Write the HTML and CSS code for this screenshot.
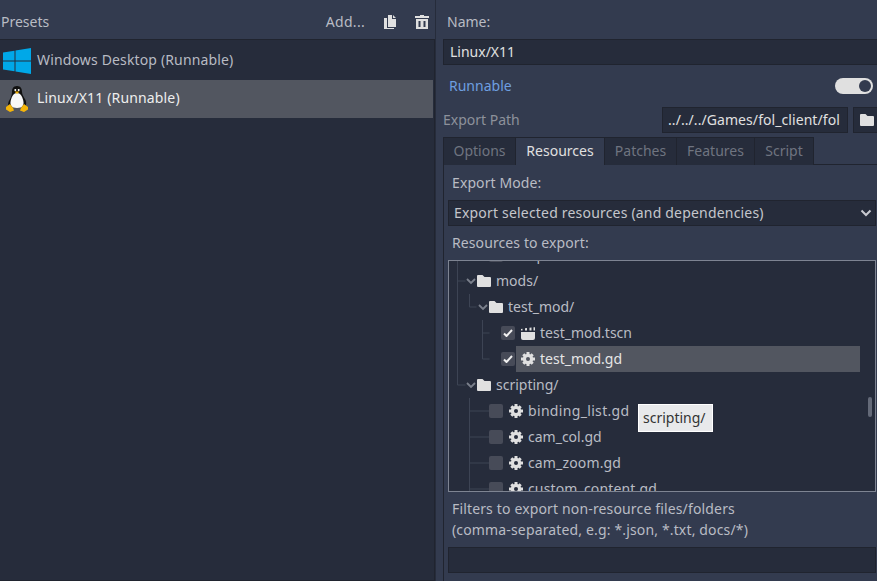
FILE: index.html
```html
<!DOCTYPE html>
<html lang="en">
<head>
  <meta charset="UTF-8">
  <title>Export</title>
  <link rel="stylesheet" href="styles.css">
</head>
<body>
  <div class="presets">
    <div class="presets-head">
      <span class="presets-title">Presets</span>
      <span class="add-btn">Add...</span>
      <svg class="head-icon" width="14" height="14" viewBox="0 0 14 14"><path fill="#e0e0e0" d="M5 0h4v4h4v8H5z M10 0l3 3h-3z M1 3h3v10h7v1H1z"/></svg>
      <svg class="head-icon" width="14" height="14" viewBox="0 0 14 14"><path fill="#e0e0e0" d="M5 0h4v1h5v2H0V1h5z M1 4h12v10H1z"/><path fill="#333b4f" d="M3.500 6h2v6h-2z M8.500 6h2v6h-2z"/></svg>
    </div>
    <div class="preset-list">
      <div class="preset-row">
        <svg width="30" height="30" viewBox="0 0 30 30"><path fill="#00a8e8" d="M1 6.500l11.500-1.700v9.700H1z M13.500 4.600L29 2v12.500H13.500z M1 15.500h11.500v9.700L1 23.500z M13.500 15.500H29V28l-15.500-2.600z"/></svg>
        <span class="wide">Windows Desktop (Runnable)</span>
      </div>
      <div class="preset-row selected">
        <svg width="30" height="30" viewBox="0 0 30 30">
          <path fill="#111" d="M15 2c4 0 5 3 5 6 0 3 2 5 3.500 8 1 2.500 1 5-.5 7H7c-1.500-2-1-4.500.5-7C9 13 10 11 10 8c0-3 1-6 5-6z"/>
          <path fill="#f8f8f8" d="M15 9c4 0 6 5 6.500 9 .3 3-1 6-6.500 6s-6.800-3-6.500-6C9 14 11 9 15 9z"/>
          <path fill="#f5b50a" d="M12.500 7.500h5l-2.500 2.500z M4 23l4-3 3 4 1 2.500-4 1.500-4-2.500z M26 23l-4-3-3 4-1 2.500 4 1.500 4-2.500z"/>
          <circle cx="13.300" cy="6" r="1" fill="#fff"/><circle cx="16.700" cy="6" r="1" fill="#fff"/>
        </svg>
        <span class="wide">Linux/X11 (Runnable)</span>
      </div>
    </div>
  </div>

  <div class="details">
    <div class="name-label">Name:</div>
    <div class="field name-field">Linux/X11</div>
    <div class="runnable-row">
      <span class="runnable">Runnable</span>
      <span class="toggle"><span class="knob"></span></span>
    </div>
    <div class="path-row">
      <span class="path-label">Export Path</span>
      <span class="field path-field">../../../Games/fol_client/fol</span>
      <span class="field path-btn">
        <svg width="14" height="12" viewBox="0 0 14 12"><use href="#folder"/></svg>
      </span>
    </div>
    <div class="tabs">
      <span class="tab tab-options">Options</span>
      <span class="tab active tab-res">Resources</span>
      <span class="tab tab-patches">Patches</span>
      <span class="tab tab-features">Features</span>
      <span class="tab tab-script">Script</span>
      <span class="tab-rest"></span>
    </div>
    <div class="tab-panel">
      <div class="panel-label mode-label">Export Mode:</div>
      <div class="field select">
        <span class="wide-more">Export selected resources (and dependencies)</span>
        <svg width="12" height="8" viewBox="0 0 12 8"><path fill="none" stroke="#c8cad0" stroke-width="2" d="M1.500 1.500L6 6l4.500-4.500"/></svg>
      </div>
      <div class="panel-label res-label">Resources to export:</div>
      <div class="tree">
        <svg class="guides" width="428" height="232" viewBox="0 0 428 232">
          <path fill="none" stroke="#3d4454" d="M9.500 0v125 M9.500 21h8 M9.500 125h8 M21.500 34v13h7 M34.500 60v39 M34.500 73h7 M34.500 99h7 M21.500 138v94 M21.500 151h20 M21.500 177h20 M21.500 203h20 M21.500 229h20"/>
        </svg>
        <div class="tree-body">
          <div class="row depth-3 file"><span class="check"></span><svg class="ic" width="14" height="12" viewBox="0 0 14 12"><use href="#folder"/></svg><span>ops/</span></div>
          <div class="row depth-0">
            <svg class="chev" width="10" height="7" viewBox="0 0 10 7"><use href="#chev"/></svg>
            <svg class="ic" width="14" height="12" viewBox="0 0 14 12"><use href="#folder"/></svg><span>mods/</span>
          </div>
          <div class="row depth-1">
            <svg class="chev" width="10" height="7" viewBox="0 0 10 7"><use href="#chev"/></svg>
            <svg class="ic" width="14" height="12" viewBox="0 0 14 12"><use href="#folder"/></svg><span>test_mod/</span>
          </div>
          <div class="row depth-2 file">
            <span class="check on"><svg width="10" height="8" viewBox="0 0 10 8"><use href="#tick"/></svg></span>
            <svg class="ic" width="14" height="13" viewBox="0 0 14 13"><path fill="#e0e0e0" d="M0 5h14v6a2 2 0 0 1-2 2H2a2 2 0 0 1-2-2z M0 2l1.500-.3v1.800H0z M4 1.300l2-.4v2.600H4z M8.500.7l2-.3v3.100h-2z M12.500.3H14v3.200h-1.500z"/></svg>
            <span>test_mod.tscn</span>
          </div>
          <div class="row depth-2 file">
            <span class="check on"><svg width="10" height="8" viewBox="0 0 10 8"><use href="#tick"/></svg></span>
            <span class="sel">
              <svg class="ic" width="14" height="14" viewBox="0 0 14 14"><use href="#gear"/></svg>
              <span>test_mod.gd</span>
            </span>
          </div>
          <div class="row depth-0">
            <svg class="chev" width="10" height="7" viewBox="0 0 10 7"><use href="#chev"/></svg>
            <svg class="ic" width="14" height="12" viewBox="0 0 14 12"><use href="#folder"/></svg><span>scripting/</span>
          </div>
          <div class="row depth-3 file"><span class="check"></span><svg class="ic" width="14" height="14" viewBox="0 0 14 14"><use href="#gear"/></svg><span class="wide-most">binding_list.gd</span></div>
          <div class="row depth-3 file"><span class="check"></span><svg class="ic" width="14" height="14" viewBox="0 0 14 14"><use href="#gear"/></svg><span>cam_col.gd</span></div>
          <div class="row depth-3 file"><span class="check"></span><svg class="ic" width="14" height="14" viewBox="0 0 14 14"><use href="#gear"/></svg><span class="wide">cam_zoom.gd</span></div>
          <div class="row depth-3 file"><span class="check"></span><svg class="ic" width="14" height="14" viewBox="0 0 14 14"><use href="#gear"/></svg><span class="wide">custom_content.gd</span></div>
        </div>
        <span class="scroll-thumb"></span>
        <div class="tooltip">scripting/</div>
      </div>
      <div class="panel-label filter-label">Filters to export non-resource files/folders<br>(comma-separated, e.g: *.json, *.txt, docs/*)</div>
      <div class="field filter-field"></div>
    </div>
  </div>

  <svg class="defs" width="0" height="0">
    <defs>
      <path id="folder" fill="#e0e0e0" d="M1 0h4.500l2 2H13a1 1 0 0 1 1 1v8a1 1 0 0 1-1 1H1a1 1 0 0 1-1-1V1a1 1 0 0 1 1-1z"/>
      <path id="chev" fill="none" stroke="#7b808c" stroke-width="1.800" d="M1 1l4 4 4-4"/>
      <path id="tick" fill="none" stroke="#f0f0f0" stroke-width="2" d="M1 4.500l2.500 2.500L9 1"/>
      <mask id="gear-hole" maskUnits="userSpaceOnUse" x="0" y="0" width="14" height="14">
        <rect width="14" height="14" fill="#fff"/>
        <circle cx="7" cy="7" r="2" fill="#000"/>
      </mask>
      <g id="gear" mask="url(#gear-hole)">
        <circle cx="7" cy="7" r="5.200" fill="#e0e0e0"/>
        <path fill="none" stroke="#e0e0e0" stroke-width="3" d="M7 0v14 M0 7h14 M2.300 2.300l9.400 9.400 M11.700 2.300l-9.400 9.400"/>
      </g>
    </defs>
  </svg>
</body>
</html>
```

FILE: styles.css
```css
html, body {
  margin: 0;
  padding: 0;
  height: 581px;
  overflow: hidden;
}

body {
  display: flex;
  background-color: #333b4f;
  font-family: "Noto Sans", sans-serif;
  font-size: 14px;
  line-height: 20px;
  color: #e0e0e0;
}

.defs {
  position: absolute;
}

/* hinted text in the editor runs a little wider */
.wide { letter-spacing: 0.15px; }
.wide-more { letter-spacing: 0.19px; }
.wide-most { letter-spacing: 0.33px; }

/* left side */
.presets {
  width: 435px;
  flex: none;
  display: flex;
  flex-direction: column;
  box-sizing: border-box;
}

.presets-head {
  height: 39px;
  display: flex;
  align-items: center;
  padding: 5px 6px 0 1px;
  box-sizing: border-box;
  color: #b9bcc4;
}

.presets-title {
  margin-right: auto;
}

.add-btn {
  margin-right: 18px;
  letter-spacing: 0.3px;
}

.head-icon {
  margin-right: 18px;
}

.head-icon:last-child {
  margin-right: 0;
}

.preset-list {
  flex: 1;
  background-color: #262c3b;
  border: 1px solid #20242f;
  border-left: none;
  padding-top: 2px;
  color: #b8bbc3;
}

.preset-row {
  height: 38px;
  display: flex;
  align-items: center;
  gap: 5px;
  padding-left: 2px;
  margin-right: 1px;
}

.preset-row span {
  margin-top: -2px;
}

.preset-row.selected {
  background-color: #525660;
  color: #eeeeee;
}

/* right side */
.details {
  flex: 1;
  min-width: 0;
  padding-left: 8px;
  box-shadow: inset 1px 0 0 #262c3b;
}

.name-label {
  height: 39px;
  padding: 12px 0 0 4px;
  box-sizing: border-box;
  color: #b9bcc4;
}

.field {
  background-color: #262c3b;
  border: 1px solid #20242f;
  box-sizing: border-box;
  height: 26px;
}

.name-field {
  padding: 2px 0 0 6px;
  border-right: none;
}

.runnable-row {
  height: 42px;
  display: flex;
  align-items: center;
  justify-content: space-between;
  padding: 0 4px 0 6px;
  box-sizing: border-box;
}

.runnable {
  color: #6e9fe0;
}

.toggle {
  width: 38px;
  height: 16px;
  background-color: #e0e0e0;
  border-radius: 8px;
  display: flex;
  align-items: center;
  justify-content: flex-end;
  padding-right: 2px;
  box-sizing: border-box;
}

.knob {
  width: 12px;
  height: 12px;
  border-radius: 50%;
  background-color: #333b4f;
}

.path-row {
  height: 30px;
  display: flex;
  align-items: flex-start;
}

.path-label {
  width: 219px;
  flex: none;
  padding-top: 3px;
  color: #8d919b;
}

.path-field {
  width: 186px;
  flex: none;
  padding: 2px 0 0 5px;
  white-space: nowrap;
  overflow: hidden;
  letter-spacing: 0.07px;
}

.path-btn {
  flex: 1;
  margin-left: 5px;
  border-right: none;
  display: flex;
  align-items: center;
  padding-left: 6px;
}

.tabs {
  display: flex;
  height: 28px;
}

.tab {
  background-color: #262c3b;
  border: 1px solid #20242f;
  border-bottom: none;
  border-left: none;
  box-sizing: border-box;
  padding-top: 3px;
  text-align: center;
  color: #6f7480;
}

.tab:first-child {
  border-left: 1px solid #20242f;
}

.tab-options { width: 73px; }
.tab-res { width: 89px; }
.tab-patches { width: 72px; }
.tab-features { width: 78px; }
.tab-script { width: 59px; }

.tab.active {
  background-color: #333b4f;
  color: #e0e0e0;
}

.tab-rest {
  flex: 1;
  border-bottom: 1px solid #20242f;
}

.tab-panel {
  border-left: 1px solid #20242f;
  padding-left: 4px;
  height: 416px;
  box-sizing: border-box;
}

.panel-label {
  padding-left: 4px;
  color: #b9bcc4;
  letter-spacing: 0.1px;
}

.mode-label {
  padding-top: 8px;
  height: 35px;
  box-sizing: border-box;
}

.select {
  display: flex;
  align-items: center;
  justify-content: space-between;
  padding: 0 3px 0 5px;
  margin-right: 1px;
  color: #c4c6cc;
}

.res-label {
  height: 34px;
  padding-top: 7px;
  box-sizing: border-box;
}

.tree {
  position: relative;
  height: 232px;
  margin-right: 1px;
  box-sizing: border-box;
  border: 1px solid #7e8492;
  background-color: #262c3b;
  overflow: hidden;
}

.guides {
  position: absolute;
  left: -1px;
  top: -1px;
}

.tree-body {
  position: relative;
  margin-top: -19px;
  color: #b9bcc4;
}

.row {
  height: 26px;
  display: flex;
  align-items: center;
  box-sizing: border-box;
}

.row .ic {
  flex: none;
}

.depth-0 { padding-left: 17px; }
.depth-1 { padding-left: 29px; }
.depth-2 { padding-left: 52px; }
.depth-3 { padding-left: 40px; }

.chev {
  flex: none;
  margin-right: 1px;
}

.depth-0 .ic, .depth-1 .ic {
  margin-right: 5px;
}

.file .check {
  margin-right: 6px;
}

.file .ic {
  margin-right: 5px;
}

.check {
  width: 14px;
  height: 14px;
  flex: none;
  border-radius: 2px;
  background-color: #474b58;
  display: flex;
  align-items: center;
  justify-content: center;
  box-sizing: border-box;
}

.sel {
  width: 344px;
  height: 26px;
  flex: none;
  margin-left: -5px;
  padding-left: 5px;
  box-sizing: border-box;
  display: flex;
  align-items: center;
  background-color: #525660;
  color: #e6e6e6;
}

.scroll-thumb {
  position: absolute;
  left: 419px;
  top: 136px;
  width: 4px;
  height: 20px;
  border-radius: 2px;
  background-color: #646a78;
}

.tooltip {
  position: absolute;
  left: 189px;
  top: 143px;
  width: 75px;
  height: 28px;
  box-sizing: border-box;
  padding: 4px 0 0 5px;
  background-color: #e8e9eb;
  color: #333;
  box-shadow: 0 0 0 1px #fff inset;
}

.filter-label {
  height: 55px;
  padding-top: 6px;
  box-sizing: border-box;
  line-height: 21px;
  letter-spacing: 0.15px;
}

.filter-field {
  margin-right: 1px;
}
```
